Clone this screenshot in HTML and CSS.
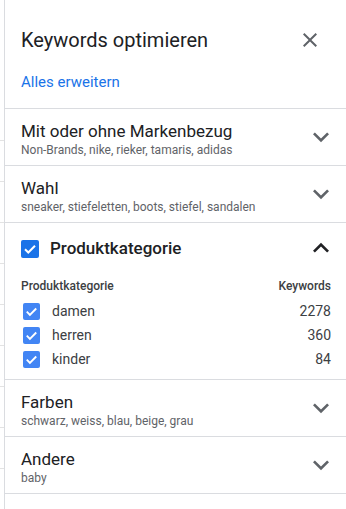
FILE: index.html
```html
<!DOCTYPE html>
<html lang="de">
<head>
<meta charset="utf-8">
<link rel="stylesheet" href="styles.css">
</head>
<body>
<div class="page">
  <div class="backdrop">
    <div class="bg-line"></div>
    <div class="bg-line"></div>
    <div class="bg-line"></div>
    <div class="bg-line"></div>
    <div class="bg-line"></div>
    <div class="bg-line"></div>
    <div class="bg-line"></div>
    <div class="bg-line"></div>
    <div class="bg-line"></div>
  </div>
  <aside class="panel">
    <header class="panel-head">
      <div class="head-row">
        <h1 class="panel-title">Keywords optimieren</h1>
        <button class="icon-btn close" aria-label="Schließen">
          <svg viewBox="0 0 24 24" width="24" height="24"><path d="M19 6.41L17.59 5 12 10.59 6.41 5 5 6.41 10.59 12 5 17.59 6.41 19 12 13.41 17.59 19 19 17.59 13.41 12z" fill="#5f6368"/></svg>
        </button>
      </div>
      <a class="expand-all" href="#">Alles erweitern</a>
    </header>

    <section class="group">
      <div class="group-text">
        <div class="group-title">Mit oder ohne Markenbezug</div>
        <div class="group-sub">Non-Brands, nike, rieker, tamaris, adidas</div>
      </div>
      <svg class="chev" viewBox="0 0 24 24" width="32" height="32"><path d="M16.59 8.59L12 13.17 7.41 8.59 6 10l6 6 6-6z" fill="#5f6368"/></svg>
    </section>

    <section class="group">
      <div class="group-text">
        <div class="group-title">Wahl</div>
        <div class="group-sub">sneaker, stiefeletten, boots, stiefel, sandalen</div>
      </div>
      <svg class="chev" viewBox="0 0 24 24" width="32" height="32"><path d="M16.59 8.59L12 13.17 7.41 8.59 6 10l6 6 6-6z" fill="#5f6368"/></svg>
    </section>

    <section class="group-open">
      <div class="open-head">
        <span class="cb cb-main">
          <svg viewBox="0 0 18 18" width="18" height="18"><path d="M4 9.2l3.3 3.3L14 5.8" fill="none" stroke="#fff" stroke-width="2"/></svg>
        </span>
        <div class="open-title">Produktkategorie</div>
        <svg class="chev up" viewBox="0 0 24 24" width="32" height="32"><path d="M7.41 15.41L12 10.83l4.59 4.58L18 14l-6-6-6 6z" fill="#202124"/></svg>
      </div>
      <div class="table">
        <div class="t-head">
          <span>Produktkategorie</span>
          <span>Keywords</span>
        </div>
        <div class="t-row">
          <span class="cb cb-small"><svg viewBox="0 0 18 18" width="17" height="17"><path d="M4 9.2l3.3 3.3L14 5.8" fill="none" stroke="#fff" stroke-width="2"/></svg></span>
          <span class="t-name">damen</span>
          <span class="t-num">2278</span>
        </div>
        <div class="t-row">
          <span class="cb cb-small"><svg viewBox="0 0 18 18" width="17" height="17"><path d="M4 9.2l3.3 3.3L14 5.8" fill="none" stroke="#fff" stroke-width="2"/></svg></span>
          <span class="t-name">herren</span>
          <span class="t-num">360</span>
        </div>
        <div class="t-row">
          <span class="cb cb-small"><svg viewBox="0 0 18 18" width="17" height="17"><path d="M4 9.2l3.3 3.3L14 5.8" fill="none" stroke="#fff" stroke-width="2"/></svg></span>
          <span class="t-name">kinder</span>
          <span class="t-num">84</span>
        </div>
      </div>
    </section>

    <section class="group">
      <div class="group-text">
        <div class="group-title">Farben</div>
        <div class="group-sub">schwarz, weiss, blau, beige, grau</div>
      </div>
      <svg class="chev" viewBox="0 0 24 24" width="32" height="32"><path d="M16.59 8.59L12 13.17 7.41 8.59 6 10l6 6 6-6z" fill="#5f6368"/></svg>
    </section>

    <section class="group">
      <div class="group-text">
        <div class="group-title">Andere</div>
        <div class="group-sub">baby</div>
      </div>
      <svg class="chev" viewBox="0 0 24 24" width="32" height="32"><path d="M16.59 8.59L12 13.17 7.41 8.59 6 10l6 6 6-6z" fill="#5f6368"/></svg>
    </section>
  </aside>
</div>
</body>
</html>
```

FILE: styles.css
```css
html, body {
  margin: 0;
  padding: 0;
  background: #fff;
}
body {
  font-family: Roboto, "Liberation Sans", Arial, sans-serif;
  color: #202124;
  width: 346px;
  height: 509px;
  overflow: hidden;
}
.page {
  display: flex;
  height: 509px;
}
.backdrop {
  width: 4px;
  flex: none;
  display: flex;
  flex-direction: column;
  padding-top: 140px;
  background: #fff;
}
.bg-line {
  height: 41px;
  flex: none;
  border-top: 1px solid #e3e3e3;
  box-sizing: border-box;
}
.panel {
  flex: 1;
  border-left: 1px solid #dadce0;
  background: #fff;
  display: flex;
  flex-direction: column;
}
.panel-head {
  padding: 24px 0 16px 16px;
  border-bottom: 1px solid #dadce0;
  display: flex;
  flex-direction: column;
}
.head-row {
  height: 32px;
  display: flex;
  align-items: center;
}
.panel-title {
  flex: 1;
  margin: 0;
  font-size: 20px;
  font-weight: 400;
  line-height: 28px;
  color: #202124;
  letter-spacing: 0;
}
.icon-btn {
  border: 0;
  background: none;
  padding: 0;
  width: 24px;
  height: 24px;
  margin-right: 24px;
  display: flex;
}
.expand-all {
  margin-top: 16px;
  font-size: 15px;
  line-height: 20px;
  color: #1a73e8;
  text-decoration: none;
  align-self: flex-start;
}
.group {
  height: 57px;
  box-sizing: border-box;
  border-bottom: 1px solid #dadce0;
  display: flex;
  align-items: center;
  padding: 0 9px 0 16px;
}
.group-text {
  flex: 1;
  display: flex;
  flex-direction: column;
  margin-top: 5px;
}
.group-title {
  font-size: 17px;
  line-height: 20px;
  color: #202124;
}
.group-sub {
  font-size: 12px;
  line-height: 18px;
  color: #5f6368;
}
.chev {
  flex: none;
}
.group-open {
  border-bottom: 1px solid #dadce0;
  padding: 0 15px 8px 16px;
}
.open-head {
  height: 50px;
  display: flex;
  align-items: center;
  margin-right: -6px;
}
.cb {
  display: flex;
  align-items: center;
  justify-content: center;
  border-radius: 2px;
  flex: none;
}
.cb-main {
  width: 18px;
  height: 18px;
  background: #1a73e8;
  margin-top: 2px;
}
.open-title {
  flex: 1;
  margin-left: 11px;
  font-size: 17px;
  font-weight: 500;
  line-height: 20px;
  color: #202124;
}
.table {
  display: flex;
  flex-direction: column;
}
.t-head {
  margin-top: 3px;
  height: 20px;
  display: flex;
  justify-content: space-between;
  align-items: center;
  font-size: 12px;
  font-weight: 500;
  color: #3c4043;
  margin-bottom: 3px;
}
.t-row {
  height: 24px;
  display: flex;
  align-items: center;
  font-size: 14px;
  color: #3c4043;
}
.cb-small {
  width: 17px;
  height: 17px;
  background: #4285f4;
  margin-left: 2px;
}
.t-name {
  flex: 1;
  margin-left: 12px;
}
.t-num {
  text-align: right;
}
```
